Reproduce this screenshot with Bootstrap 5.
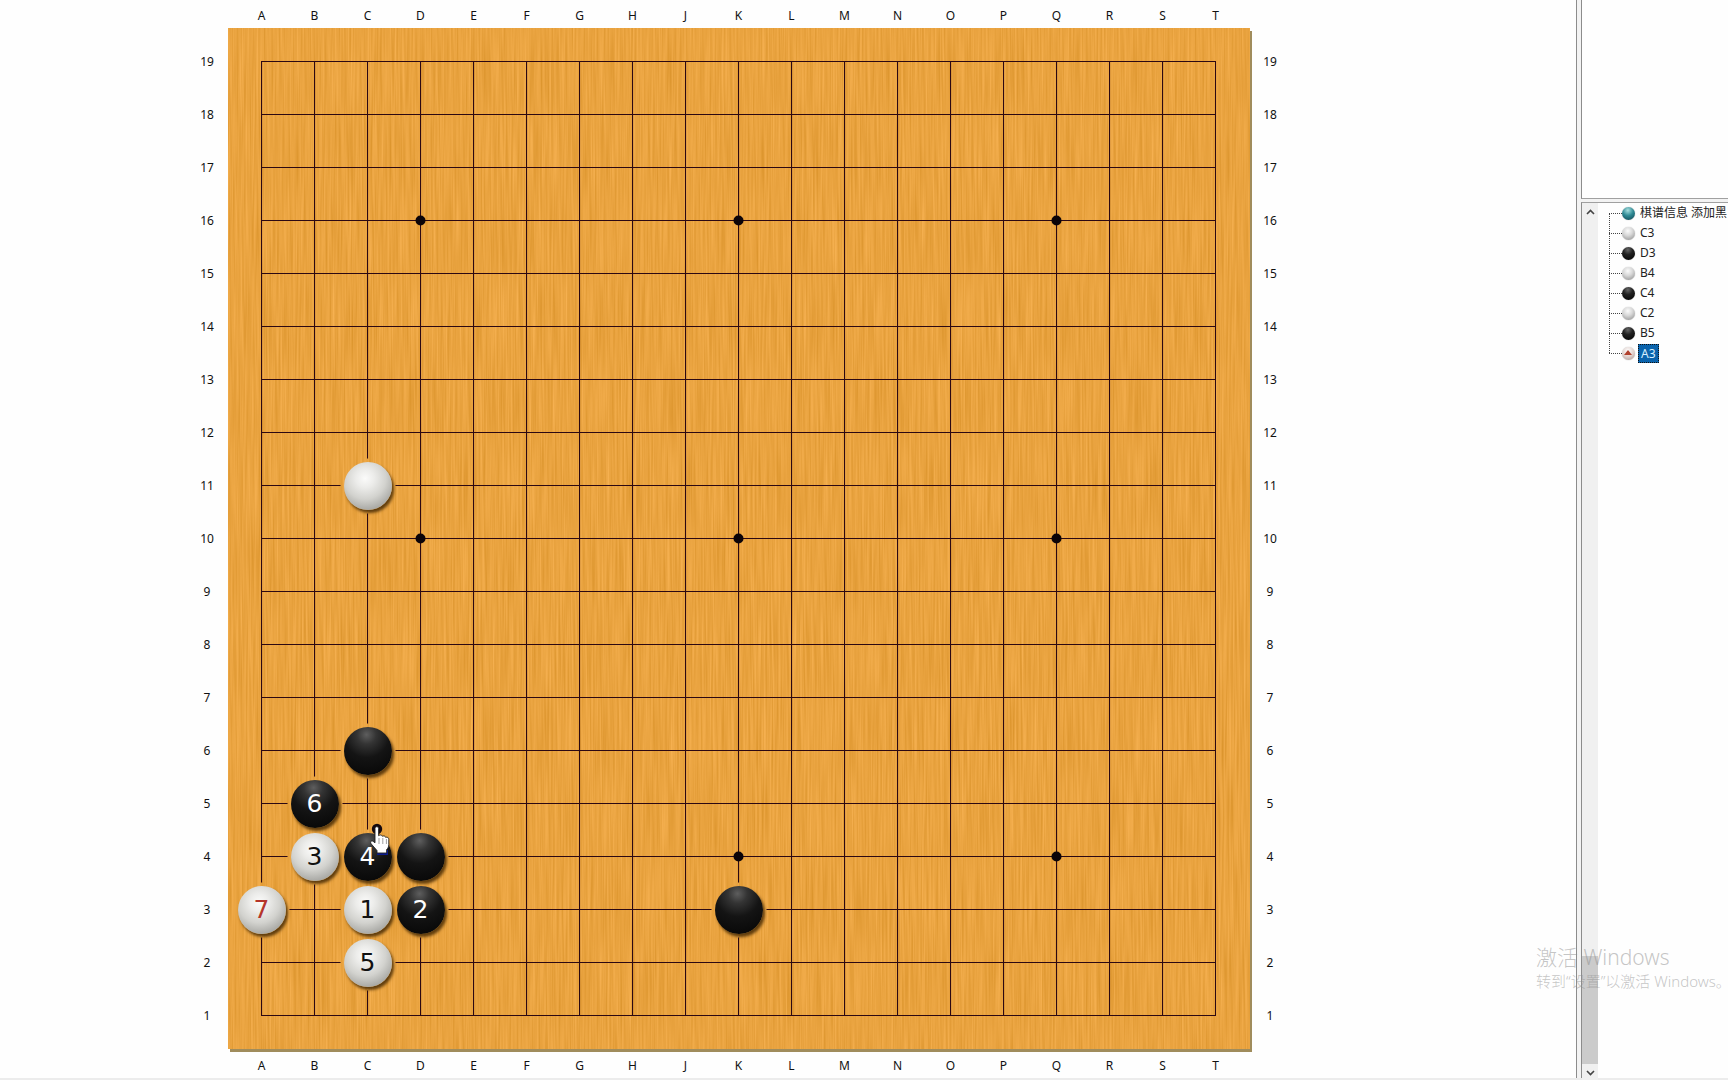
<!DOCTYPE html>
<html lang="zh">
<head>
<meta charset="utf-8">
<title>棋谱</title>
<link href="https://cdn.jsdelivr.net/npm/bootstrap@5.3.0/dist/css/bootstrap.min.css" rel="stylesheet">
<style>
html,body{margin:0;height:1080px;overflow:hidden;background:#fefefe}
body{font-family:"Noto Sans","Noto Sans CJK SC",sans-serif;font-size:12px;color:#111}
.shell{width:1728px;height:1078px}
.workspace{width:1576px;display:grid;grid-template-columns:228px 1022px 40px;grid-template-rows:28px 1021px 29px}
.hlabels{padding-left:7px;padding-top:4px}
.hlabels span{width:53px;text-align:center;flex:none}
.vlabels{padding-top:7px}
.vlabels span{height:53px;flex:none}
.vleft{padding-left:190px;width:224px}
.vright{width:40px}
.goban{width:1022px;height:1021px;box-shadow:2px 3px 0 #a08c5c;background:#e9a340}
.goban-art{position:absolute;left:0;top:0;width:1022px;height:1021px;display:block}
.stone{position:absolute;width:48px;height:48px;border-radius:50%;left:calc(9.5px + 53px*var(--c));top:calc(9.5px + 53px*var(--r));box-shadow:2px 3px 3px rgba(70,42,5,.85);font-family:"DejaVu Sans",sans-serif;font-size:25px;line-height:1}
.stone-w{background:radial-gradient(circle at 44% 34%,#fbfbfa 0,#ececea 22%,#d2d2ce 50%,#a6a6a2 78%,#80807c 100%);color:#111}
.stone-b{background:radial-gradient(circle at 47% 16%,#5e5e5e 0,#343434 20%,#141414 48%,#040404 100%);color:#fff}
.stone-last{color:#b5352a}
.cursor-art{position:absolute;left:138px;top:792px;width:32px;height:40px}
.sidepane{width:152px;border-left:1px solid #8c8c8c;background:#f3f3f3;padding-left:4px;height:1078px}
.pane-top{height:199px;background:#fefefe;border-left:1px solid #8c8c8c;border-bottom:1px solid #a0a0a0}
.pane-tree{margin-top:3px;background:#fefefe;border-left:1px solid #8c8c8c;border-top:1px solid #a0a0a0;min-height:0;flex:1 1 auto}
.scrolltrack{width:16px;background:#f0f0f0;flex:none;height:878px}
.scrollbtn{height:17px;flex:none;color:#444}
.scrollthumb{height:108px;background:#cbcbcb;flex:none}
.treebody{position:relative;padding:0 0 0 30px;width:130px;overflow:hidden}
.treeline{position:absolute;left:11px;top:10px;height:140px;border-left:1px dotted #444}
.treerow{height:20px;white-space:nowrap}
.stub{width:13px;border-top:1px dotted #444;flex:none;margin-left:-19px;margin-right:0}
.dot{width:13px;height:13px;border-radius:50%;flex:none;margin-right:5px;margin-left:0;box-shadow:0 0 1px rgba(0,0,0,.4)}
.dot-w{background:radial-gradient(circle at 45% 30%,#fbfbfb 0,#d8d8d8 40%,#888 100%)}
.dot-b{background:radial-gradient(circle at 45% 22%,#666 0,#222 38%,#000 100%)}
.dot-t{background:radial-gradient(circle at 45% 25%,#a8e0e0 0,#2f8a94 45%,#0c3f4c 100%)}
.dot-l{position:relative;background:radial-gradient(circle at 45% 30%,#fff 0,#e0d0cc 50%,#a0908c 100%)}
.dot-l::after{content:"";position:absolute;left:2px;top:3px;border-left:4.5px solid transparent;border-right:4.5px solid transparent;border-bottom:5px solid #b0402c}
.treerow-text{font-size:12px;color:#222}
.treerow-sel{background:#0a63ac;color:#d8f0ff;outline:1px dotted #111;outline-offset:-1px;padding:0 3px;margin-left:-2px;height:19px;line-height:19px}
.winmark{position:absolute;left:1536px;top:943px;color:rgba(140,140,140,.5);white-space:nowrap;pointer-events:none;font-family:"Noto Sans","Noto Sans CJK SC",sans-serif;font-weight:300}
.winmark-a{font-size:21px;line-height:28px}
.winmark-b{font-size:15px;line-height:20px}
.baseline-strip{height:2px;background:#ececec}
</style>
</head>
<body>
<div class="shell d-flex">
  <main class="workspace">
    <div></div>
    <div class="hlabels d-flex align-items-center">
      <span>A</span><span>B</span><span>C</span><span>D</span><span>E</span><span>F</span><span>G</span><span>H</span><span>J</span><span>K</span><span>L</span><span>M</span><span>N</span><span>O</span><span>P</span><span>Q</span><span>R</span><span>S</span><span>T</span>
    </div>
    <div></div>

    <div class="vlabels vleft d-flex flex-column">
      <span class="d-flex align-items-center justify-content-center">19</span><span class="d-flex align-items-center justify-content-center">18</span><span class="d-flex align-items-center justify-content-center">17</span><span class="d-flex align-items-center justify-content-center">16</span><span class="d-flex align-items-center justify-content-center">15</span><span class="d-flex align-items-center justify-content-center">14</span><span class="d-flex align-items-center justify-content-center">13</span><span class="d-flex align-items-center justify-content-center">12</span><span class="d-flex align-items-center justify-content-center">11</span><span class="d-flex align-items-center justify-content-center">10</span><span class="d-flex align-items-center justify-content-center">9</span><span class="d-flex align-items-center justify-content-center">8</span><span class="d-flex align-items-center justify-content-center">7</span><span class="d-flex align-items-center justify-content-center">6</span><span class="d-flex align-items-center justify-content-center">5</span><span class="d-flex align-items-center justify-content-center">4</span><span class="d-flex align-items-center justify-content-center">3</span><span class="d-flex align-items-center justify-content-center">2</span><span class="d-flex align-items-center justify-content-center">1</span>
    </div>

    <div class="goban position-relative">
      <svg class="goban-art" viewBox="0 0 1022 1021" xmlns="http://www.w3.org/2000/svg" aria-hidden="true">
        <defs>
          <filter id="wood" x="0" y="0" width="100%" height="100%" color-interpolation-filters="sRGB">
            <feTurbulence type="fractalNoise" baseFrequency="0.55 0.012" numOctaves="2" seed="7"/>
            <feColorMatrix type="matrix" values="0.13 0 0 0 0.85  0.14 0 0 0 0.57  0.18 0 0 0 0.16  0 0 0 0 1"/>
          </filter>
          <pattern id="cell" x="33" y="33" width="53" height="53" patternUnits="userSpaceOnUse">
            <path d="M.5 53V.5H53" fill="none" stroke="#2c0812" stroke-width="1.150"/>
          </pattern>
          <mask id="gaps" maskUnits="userSpaceOnUse" x="0" y="0" width="1022" height="1021">
            <rect width="1022" height="1021" fill="#fff"/>
            <g fill="#000">
              <circle cx="140" cy="458" r="27.5"/><circle cx="140" cy="723" r="27.5"/><circle cx="87" cy="776" r="27.5"/>
              <circle cx="87" cy="829" r="27.5"/><circle cx="140" cy="829" r="27.5"/><circle cx="193" cy="829" r="27.5"/>
              <circle cx="34" cy="882" r="27.5"/><circle cx="140" cy="882" r="27.5"/><circle cx="193" cy="882" r="27.5"/>
              <circle cx="511" cy="882" r="27.5"/><circle cx="140" cy="935" r="27.5"/>
            </g>
          </mask>
        </defs>
        <rect width="1022" height="1021" filter="url(#wood)"/>
        <rect x="33" y="33" width="955" height="955" fill="url(#cell)" mask="url(#gaps)"/>
        <g fill="#0c0408">
          <circle cx="192.5" cy="192.5" r="5"/><circle cx="510.5" cy="192.5" r="5"/><circle cx="828.5" cy="192.5" r="5"/>
          <circle cx="192.5" cy="510.5" r="5"/><circle cx="510.5" cy="510.5" r="5"/><circle cx="828.5" cy="510.5" r="5"/>
          <circle cx="510.5" cy="828.5" r="5"/><circle cx="828.5" cy="828.5" r="5"/>
        </g>
      </svg>
      <div class="stone stone-w" style="--c:2;--r:8"></div>
      <div class="stone stone-b" style="--c:2;--r:13"></div>
      <div class="stone stone-b d-flex align-items-center justify-content-center" style="--c:1;--r:14">6</div>
      <div class="stone stone-w d-flex align-items-center justify-content-center" style="--c:1;--r:15">3</div>
      <div class="stone stone-b d-flex align-items-center justify-content-center" style="--c:2;--r:15">4</div>
      <div class="stone stone-b" style="--c:3;--r:15"></div>
      <div class="stone stone-w stone-last d-flex align-items-center justify-content-center" style="--c:0;--r:16">7</div>
      <div class="stone stone-w d-flex align-items-center justify-content-center" style="--c:2;--r:16">1</div>
      <div class="stone stone-b d-flex align-items-center justify-content-center" style="--c:3;--r:16">2</div>
      <div class="stone stone-b" style="--c:9;--r:16"></div>
      <div class="stone stone-w d-flex align-items-center justify-content-center" style="--c:2;--r:17">5</div>
      <svg class="cursor-art" viewBox="0 0 32 40" xmlns="http://www.w3.org/2000/svg" aria-hidden="true">
        <circle cx="11" cy="9" r="5.2" fill="#14080e"/>
        <rect x="11" y="30" width="11" height="5" fill="#0a1a8c"/>
        <g transform="translate(0 2)">
          <path d="M9 6.500c0-2.400 3.600-2.400 3.600 0v7.200l1-.5c1.300-.5 2.300.1 2.600 1l.9-.2c1.300-.3 2.300.4 2.500 1.300l.8-.1c1.500-.1 2.400.9 2.400 2.200v5c0 2.400-1 4-2.200 5.200V31H11v-2.400L5.300 22c-1.600-2-.1-3.800 1.900-2.600L9 20.800z" fill="#fff" stroke="#222" stroke-width=".9" stroke-linejoin="round"/>
          <path d="M13 16v6M16.800 16v6M20.400 17v5" stroke="#777" stroke-width=".7" fill="none"/>
        </g>
      </svg>
    </div>

    <div class="vlabels vright d-flex flex-column">
      <span class="d-flex align-items-center justify-content-center">19</span><span class="d-flex align-items-center justify-content-center">18</span><span class="d-flex align-items-center justify-content-center">17</span><span class="d-flex align-items-center justify-content-center">16</span><span class="d-flex align-items-center justify-content-center">15</span><span class="d-flex align-items-center justify-content-center">14</span><span class="d-flex align-items-center justify-content-center">13</span><span class="d-flex align-items-center justify-content-center">12</span><span class="d-flex align-items-center justify-content-center">11</span><span class="d-flex align-items-center justify-content-center">10</span><span class="d-flex align-items-center justify-content-center">9</span><span class="d-flex align-items-center justify-content-center">8</span><span class="d-flex align-items-center justify-content-center">7</span><span class="d-flex align-items-center justify-content-center">6</span><span class="d-flex align-items-center justify-content-center">5</span><span class="d-flex align-items-center justify-content-center">4</span><span class="d-flex align-items-center justify-content-center">3</span><span class="d-flex align-items-center justify-content-center">2</span><span class="d-flex align-items-center justify-content-center">1</span>
    </div>

    <div></div>
    <div class="hlabels d-flex align-items-center">
      <span>A</span><span>B</span><span>C</span><span>D</span><span>E</span><span>F</span><span>G</span><span>H</span><span>J</span><span>K</span><span>L</span><span>M</span><span>N</span><span>O</span><span>P</span><span>Q</span><span>R</span><span>S</span><span>T</span>
    </div>
    <div></div>
  </main>

  <aside class="sidepane d-flex flex-column">
    <div class="pane-top flex-shrink-0"></div>
    <div class="pane-tree d-flex">
      <div class="scrolltrack d-flex flex-column">
        <div class="scrollbtn d-flex align-items-center justify-content-center">
          <svg width="9" height="6" viewBox="0 0 9 6" aria-hidden="true"><path d="M1 5l3.500-3.500L8 5" fill="none" stroke="#444" stroke-width="1.600"/></svg>
        </div>
        <div class="flex-grow-1"></div>
        <div class="scrollthumb"></div>
        <div class="scrollbtn d-flex align-items-center justify-content-center">
          <svg width="9" height="6" viewBox="0 0 9 6" aria-hidden="true"><path d="M1 1l3.500 3.500L8 1" fill="none" stroke="#444" stroke-width="1.600"/></svg>
        </div>
      </div>
      <div class="treebody">
        <div class="treeline"></div>
        <div class="treerow d-flex align-items-center"><i class="stub"></i><i class="dot dot-t"></i><span class="treerow-text">棋谱信息 添加黑</span></div>
        <div class="treerow d-flex align-items-center"><i class="stub"></i><i class="dot dot-w"></i><span class="treerow-text">C3</span></div>
        <div class="treerow d-flex align-items-center"><i class="stub"></i><i class="dot dot-b"></i><span class="treerow-text">D3</span></div>
        <div class="treerow d-flex align-items-center"><i class="stub"></i><i class="dot dot-w"></i><span class="treerow-text">B4</span></div>
        <div class="treerow d-flex align-items-center"><i class="stub"></i><i class="dot dot-b"></i><span class="treerow-text">C4</span></div>
        <div class="treerow d-flex align-items-center"><i class="stub"></i><i class="dot dot-w"></i><span class="treerow-text">C2</span></div>
        <div class="treerow d-flex align-items-center"><i class="stub"></i><i class="dot dot-b"></i><span class="treerow-text">B5</span></div>
        <div class="treerow d-flex align-items-center"><i class="stub"></i><i class="dot dot-l"></i><span class="treerow-text treerow-sel">A3</span></div>
      </div>
    </div>
  </aside>
</div>
<div class="baseline-strip"></div>
<div class="winmark">
  <div class="winmark-a">激活 Windows</div>
  <div class="winmark-b">转到“设置”以激活 Windows。</div>
</div>
<script src="https://cdn.jsdelivr.net/npm/bootstrap@5.3.0/dist/js/bootstrap.bundle.min.js"></script>
</body>
</html>
